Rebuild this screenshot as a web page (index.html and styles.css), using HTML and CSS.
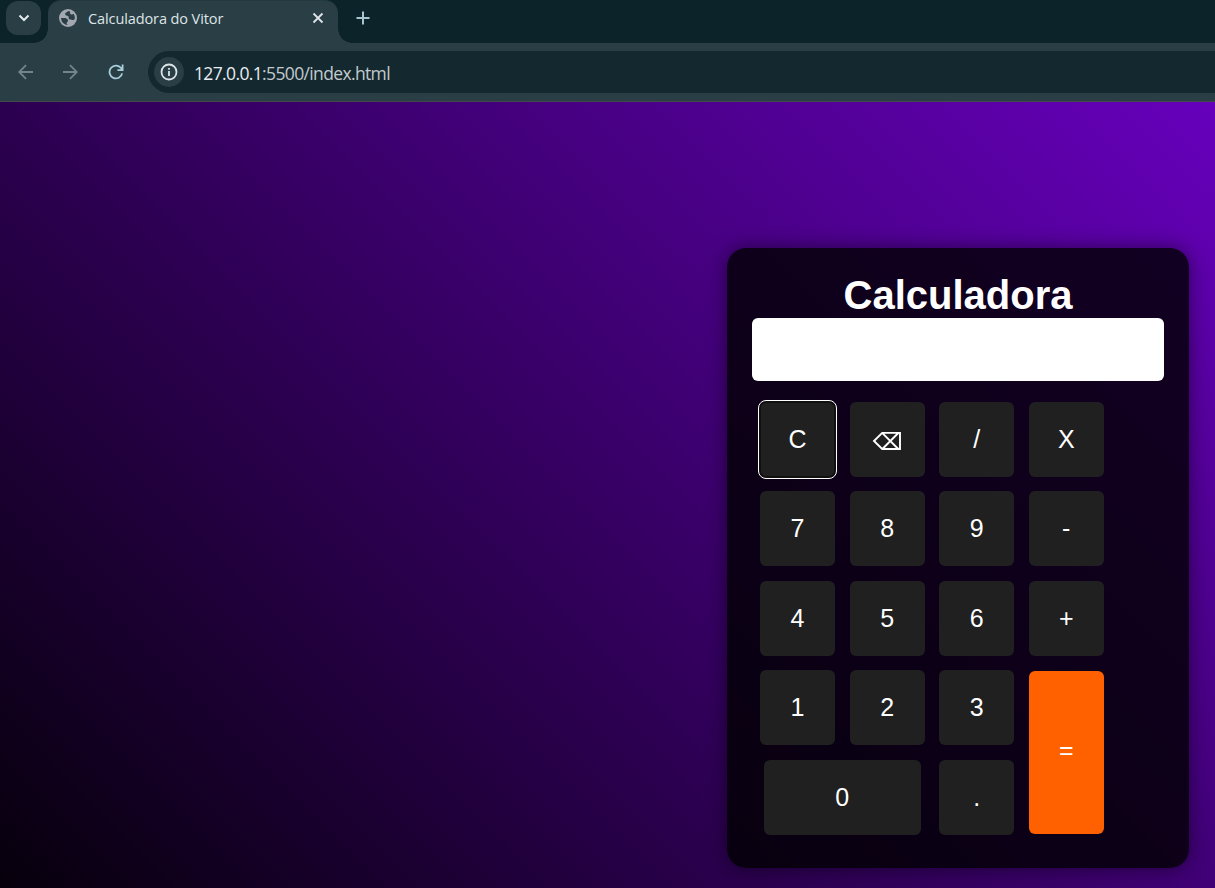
FILE: index.html
```html
<!DOCTYPE html>
<html lang="pt-BR">
<head>
<meta charset="utf-8">
<title>Calculadora do Vitor</title>
<link rel="stylesheet" href="styles.css">
</head>
<body>
<div class="window">
  <header class="tabstrip">
    <button class="tab-search" aria-label="Tabs"><svg width="12" height="8" viewBox="0 0 12 8"><path d="M1.500 1.500 6 6l4.500-4.500" fill="none" stroke="currentColor" stroke-width="2"/></svg></button>
    <div class="tab">
      <svg class="globe" width="18" height="18" viewBox="0 0 18 18"><circle cx="9" cy="9" r="9" fill="#a3a8b0"/><path d="M10.300 2.100C8.600 2.100 8.300 3.200 7.300 3.500 6 3.900 5.900 5.200 6.500 6c.7 1 2.500.5 3 1.500.4.900-.2 1.700.5 2.500.9 1 2.400.5 3.300.9 1 .4 1.700-.2 2.500-.9A7 7 0 0 0 14.600 4.800c-.9.8-2.600.9-3.200.1-.7-.9.2-1.900-1.100-2.800Z" fill="#293e45"/><path d="M2 9.100h3.600c1.800 0 3.400.9 3.400 2.600 0 1.500-1.400 1.300-1.400 2.500 0 .7.600.9 1.400 1.800A7 7 0 0 1 2 9.100Z" fill="#293e45"/></svg>
      <span class="tab-title">Calculadora do Vitor</span>
      <svg class="close" width="12" height="12" viewBox="0 0 12 12"><path d="m1.500 1.500 9 9m0-9-9 9" stroke="currentColor" stroke-width="1.800"/></svg>
    </div>
    <svg class="new-tab" width="14" height="14" viewBox="0 0 14 14"><path d="M7 .5v13M.5 7h13" stroke="currentColor" stroke-width="2"/></svg>
  </header>
  <nav class="toolbar">
    <svg class="nav-icon dim" width="16" height="16" viewBox="0 0 16 16"><path d="M15 8H1.500M8 1.200 1.200 8 8 14.800"/></svg>
    <svg class="nav-icon dim" width="16" height="16" viewBox="0 0 16 16"><path d="M1 8h13.500M8 1.200 14.800 8 8 14.800"/></svg>
    <svg class="nav-icon reload" width="16" height="16" viewBox="0 0 16 16"><path d="M14.200 9.400A6.400 6.400 0 1 1 12.600 3.600l1.900 2M14.600.6v5.500H9.400"/></svg>
    <div class="address">
      <span class="info"><svg width="18" height="18" viewBox="0 0 18 18"><circle cx="9" cy="9" r="7.500" fill="none" stroke="currentColor" stroke-width="1.800"/><path d="M9 8v5M9 4.900v1.800" stroke="currentColor" stroke-width="1.800"/></svg></span>
      <span class="url"><b class="host">127.0.0.1</b>:5500/index.html</span>
    </div>
  </nav>
  <main class="page">
    <section class="calculator">
      <h1 class="title">Calculadora</h1>
      <p class="display"></p>
      <div class="keys">
        <button class="key focused">C</button>
        <button class="key" aria-label="Backspace"><svg class="erase" width="30" height="20" viewBox="0 0 30 20"><path d="M2 10 10.200 1.900H28V18H10.200ZM10.400 2.200 26.300 18M26.300 2 10.400 18" fill="none" stroke="#fff" stroke-width="1.900"/></svg></button>
        <button class="key">/</button>
        <button class="key">X</button>
        <button class="key">7</button>
        <button class="key">8</button>
        <button class="key">9</button>
        <button class="key">-</button>
        <button class="key">4</button>
        <button class="key">5</button>
        <button class="key">6</button>
        <button class="key">+</button>
        <button class="key">1</button>
        <button class="key">2</button>
        <button class="key">3</button>
        <button class="key equals">=</button>
        <button class="key zero">0</button>
        <button class="key">.</button>
      </div>
    </section>
  </main>
</div>
</body>
</html>
```
FILE: styles.css
```css
* { box-sizing: border-box; margin: 0; padding: 0; }
body { overflow: hidden; }
button { border: 0; }
svg { display: block; flex: none; }

.window {
  width: 1215px;
  height: 888px;
  display: flex;
  flex-direction: column;
  overflow: hidden;
  background: #293e45;
  font-family: "Open Sans", "Noto Sans", sans-serif;
}

.tabstrip {
  height: 43px;
  flex: none;
  display: flex;
  align-items: flex-start;
  padding-left: 6px;
  background: #0c2329;
}
.tab-search {
  width: 35px;
  height: 34px;
  margin-top: 1px;
  display: grid;
  place-items: center;
  border-radius: 12px;
  background: #293e45;
  color: #e2eaed;
}
.tab {
  position: relative;
  width: 290px;
  height: 43px;
  margin-left: 7px;
  padding: 0 14px 8px 11px;
  display: flex;
  align-items: center;
  border-radius: 13px 13px 0 0;
  border-top: 1px solid #223940;
  background: #293e45;
  color: #dfe5e8;
}
.tab::before,
.tab::after {
  content: "";
  position: absolute;
  bottom: 0;
  width: 14px;
  height: 14px;
}
.tab::before { right: 100%; background: radial-gradient(circle at 0 0, transparent 13.500px, #293e45 14px); }
.tab::after { left: 100%; background: radial-gradient(circle at 100% 0, transparent 13.500px, #293e45 14px); }
.tab-title {
  flex: 1;
  margin-left: 11px;
  font-size: 14.500px;
  letter-spacing: -0.100px;
  white-space: nowrap;
}
.new-tab { margin: 11px 0 0 18px; color: #a9c5cf; }

.toolbar {
  height: 59px;
  flex: none;
  display: flex;
  align-items: center;
  padding-left: 18px;
  border-bottom: 1px solid #43494b;
}
.nav-icon { fill: none; stroke: #a9ced9; stroke-width: 1.800; }
.nav-icon + .nav-icon { margin-left: 28px; }
.nav-icon.reload { margin-left: 30px; }
.nav-icon.dim { stroke: #75838a; }
.address {
  flex: 1;
  height: 42px;
  margin-left: 24px;
  padding-left: 6px;
  display: flex;
  align-items: center;
  border-radius: 21px 0 0 21px;
  background: #13292f;
}
.info {
  width: 30px;
  height: 30px;
  display: grid;
  place-items: center;
  border-radius: 50%;
  background: #293e45;
  color: #dce3e7;
}
.url {
  margin: 1px 0 0 10px;
  font-size: 17.500px;
  letter-spacing: -0.640px;
  color: #c3cacd;
  white-space: nowrap;
}
.host { font-weight: 400; color: #e9edef; }

/* The gradient spans the full desktop-width page; the window shows its left part. */
.page {
  flex: 1;
  padding: 146px 0 0 727px;
  background: linear-gradient(45deg, #000, #8800fa) 0 0 / 1916px 913px no-repeat;
}
.calculator {
  width: 462px;
  height: 620px;
  padding: 25px;
  border-radius: 19px;
  background: rgba(0, 0, 0, 0.8);
  box-shadow: 0 0 19px rgba(0, 0, 0, 0.5);
  font-family: "Liberation Sans", Arial, sans-serif;
  color: #fff;
}
.title {
  height: 45px;
  font-size: 40px;
  line-height: 45px;
  text-align: center;
}
.display {
  height: 63px;
  border-radius: 6px;
  background: #fff;
}
.keys {
  display: grid;
  grid-template-columns: repeat(4, 75px);
  grid-template-rows: repeat(5, 75px);
  gap: 14.600px;
  margin: 20.600px 0 0 8px;
}
.key {
  border-radius: 6px;
  background: #202020;
  color: #fff;
  font: 25px "Liberation Sans", Arial, sans-serif;
}
.key.focused {
  border: 1px solid #101010;
  box-shadow: 0 0 0 1px #101010;
  outline: 1px solid #fff;
  outline-offset: 1px;
}
.erase { margin: 4px auto 0; }
.equals {
  grid-column: 4;
  grid-row: 4 / span 2;
  height: 163px;
  margin-top: 0.600px;
  padding-bottom: 3px;
  background: #ff6000;
}
.zero {
  grid-column: 1 / span 2;
  width: 157px;
  justify-self: center;
}
```
